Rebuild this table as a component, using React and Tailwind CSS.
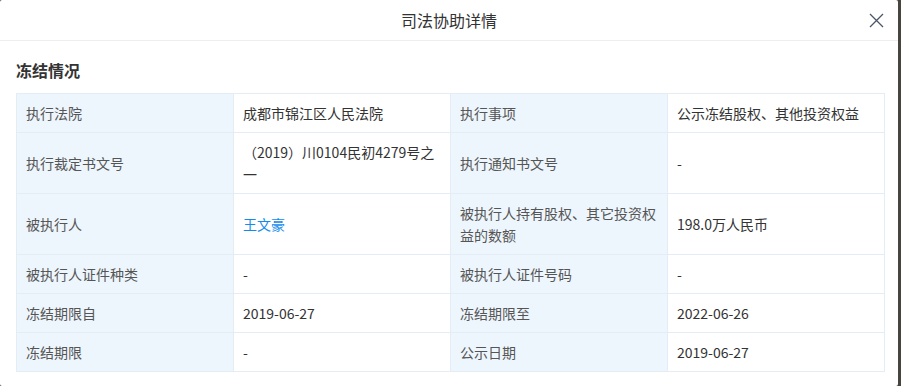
import React from 'react';

const rows = [
    [['执行法院', '成都市锦江区人民法院'], ['执行事项', '公示冻结股权、其他投资权益']],
    [['执行裁定书文号', '（2019）川0104民初4279号之一'], ['执行通知书文号', '-']],
    [['被执行人', '王文豪', true], ['被执行人持有股权、其它投资权益的数额', '198.0万人民币']],
    [['被执行人证件种类', '-'], ['被执行人证件号码', '-']],
    [['冻结期限自', '2019-06-27'], ['冻结期限至', '2022-06-26']],
    [['冻结期限', '-'], ['公示日期', '2019-06-27']],
];

const App = () => {
    return (
        <div
            className="flex h-[386px] w-[901px] overflow-hidden bg-[#4a4440]"
            style={{ fontFamily: '"Noto Sans CJK SC", "Noto Sans", sans-serif' }}
        >
            <div className="w-[898px] h-full bg-white rounded-[2px]">
                {/* header */}
                <div className="relative h-[41px] border-b border-[#eeeeee] flex items-center justify-center">
                    <span className="text-[16px] text-[#333] leading-[22px]">司法协助详情</span>
                    <button className="absolute right-[14px] top-[12px] w-[16px] h-[16px] flex items-center justify-center">
                        <svg width="15" height="15" viewBox="0 0 15 15" fill="none" stroke="#4a5568" strokeWidth="1.3">
                            <path d="M1 1L14 14M14 1L1 14" />
                        </svg>
                    </button>
                </div>

                {/* body */}
                <div className="pt-[18px] pl-[16px]">
                    <h3 className="text-[16px] font-bold leading-[22px] text-[#333] mb-[12px]">冻结情况</h3>
                    <table className="table-fixed border-collapse w-[868px] text-[14px] leading-[22px]">
                        <colgroup>
                            <col className="w-[217px]" />
                            <col className="w-[217px]" />
                            <col className="w-[217px]" />
                            <col className="w-[217px]" />
                        </colgroup>
                        <tbody>
                            {rows.map((row, i) => (
                                <tr key={i}>
                                    {row.map(([label, value, link], j) => (
                                        <React.Fragment key={j}>
                                            <td className="border border-[#e4edf6] bg-[#eef6fd] text-[#555] px-[9px] py-[8px] align-middle">
                                                {label}
                                            </td>
                                            <td className={`border border-[#e4edf6] px-[9px] py-[8px] align-middle ${link ? 'text-[#128bed]' : 'text-[#333]'}`}>
                                                {value}
                                            </td>
                                        </React.Fragment>
                                    ))}
                                </tr>
                            ))}
                        </tbody>
                    </table>
                </div>
            </div>
        </div>
    );
};

export default App;
